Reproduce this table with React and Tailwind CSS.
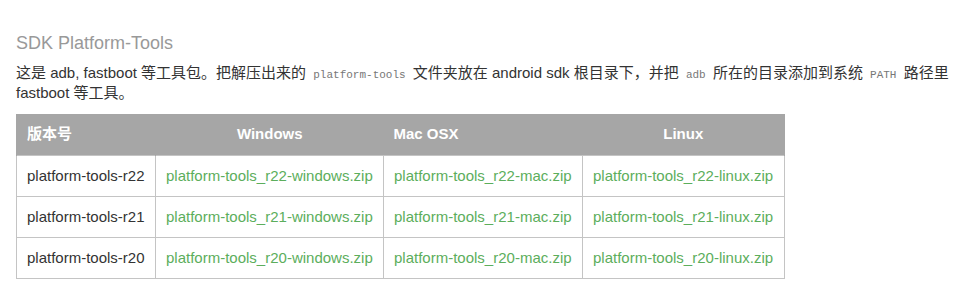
import React from 'react';

const rows = ['r22', 'r21', 'r20'];

const Code = ({ children }) => (
    <code className="px-[3px] text-[11px] leading-[14px] text-[#777]" style={{ fontFamily: '"Liberation Mono", "DejaVu Sans Mono", monospace' }}>
        {children}
    </code>
);

export default function App() {
    return (
        <div
            className="bg-white pl-4 pr-1 pt-[31px] text-[#333]"
            style={{ fontFamily: '"Liberation Sans", "Noto Sans CJK SC", sans-serif' }}
        >
            <h2 className="text-[18px] leading-[24px] text-[#999] mb-[8px]">SDK Platform-Tools</h2>
            <p className="text-[15px] leading-[20px] mb-[11px]">
                这是 adb, fastboot 等工具包。把解压出来的 <Code>platform-tools</Code> 文件夹放在 android sdk 根目录下，并把 <Code>adb</Code> 所在的目录添加到系统 <Code>PATH</Code> 路径里 fastboot 等工具。
            </p>

            <table className="border-collapse text-[15px] leading-[20px]">
                <colgroup>
                    <col className="w-[139px]" />
                    <col className="w-[228px]" />
                    <col className="w-[199px]" />
                    <col className="w-[202px]" />
                </colgroup>
                <thead>
                    <tr className="bg-[#a6a6a6] text-white font-bold h-[41px]">
                        <th className="px-[10px] text-left font-bold border-x border-[#a6a6a6]">版本号</th>
                        <th className="px-[10px] text-center font-bold">Windows</th>
                        <th className="px-[10px] text-left font-bold">Mac OSX</th>
                        <th className="px-[10px] text-center font-bold border-r border-[#a6a6a6]">Linux</th>
                    </tr>
                </thead>
                <tbody>
                    {rows.map((r) => (
                        <tr key={r} className="h-[41px]">
                            <td className="border border-[#c4c4c4] px-[10px]">platform-tools-{r}</td>
                            <td className="border border-[#c4c4c4] px-[10px] text-[#5cae5c]">platform-tools_{r}-windows.zip</td>
                            <td className="border border-[#c4c4c4] px-[10px] text-[#5cae5c]">platform-tools_{r}-mac.zip</td>
                            <td className="border border-[#c4c4c4] px-[10px] text-[#5cae5c]">platform-tools_{r}-linux.zip</td>
                        </tr>
                    ))}
                </tbody>
            </table>
        </div>
    );
}
